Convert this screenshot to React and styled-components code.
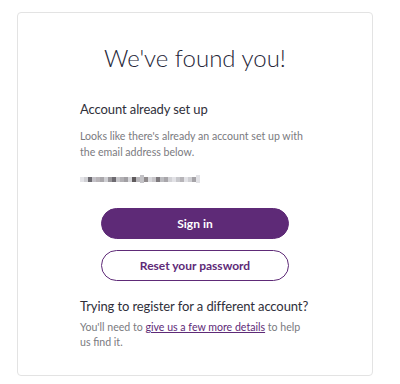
import React from "react";
import styled, { createGlobalStyle } from "styled-components";

const Global = createGlobalStyle`
  html, body {
    margin: 0;
    padding: 0;
    background: #fff;
  }
  body {
    font-family: Lato, "Open Sans", sans-serif;
    color: #2f2f3a;
  }
`;

const Card = styled.div`
  box-sizing: border-box;
  margin: 12px 0 0 17px;
  width: 356px;
  height: 364px;
  border: 1px solid #e3e3e3;
  border-radius: 4px;
  display: flex;
  flex-direction: column;
  align-items: center;
  padding-top: 30px;
`;

const Title = styled.h1`
  margin: 0;
  font-size: 24px;
  font-weight: 300;
  line-height: 30px;
  color: #262638;
`;

const Column = styled.div`
  width: 236px;
  margin-left: 6px;
  margin-top: 28px;
  display: flex;
  flex-direction: column;
`;

const Heading = styled.h2`
  margin: 0;
  font-size: 13px;
  font-weight: 400;
  line-height: 17px;
  letter-spacing: -0.1px;
  color: #2f2f3a;
`;

const Para = styled.p`
  margin: ${(p) => p.$top || 0}px 0 0;
  max-width: ${(p) => p.$max || 236}px;
  font-size: 10.6px;
  line-height: ${(p) => p.$lh || 16}px;
  color: #7a7a80;

  a {
    color: #5e2a77;
    text-decoration: underline;
  }
`;

const Blur = styled.div`
  margin-top: 13px;
  display: flex;
  height: 12px;
  align-items: center;
`;

const Pix = styled.span`
  width: 4px;
  height: ${(p) => p.$h || 5}px;
  background: ${(p) => p.$c};
`;

const Buttons = styled.div`
  margin-top: 23px;
  display: flex;
  flex-direction: column;
  align-items: center;
  gap: 11px;
`;

const Button = styled.button`
  box-sizing: border-box;
  width: 188px;
  height: 31px;
  border-radius: 16px;
  font-family: Lato, sans-serif;
  font-size: 12px;
  font-weight: 700;
  cursor: pointer;
  border: 1.5px solid #5e2a77;
  background: ${(p) => (p.$outline ? "#fff" : "#5e2a77")};
  color: ${(p) => (p.$outline ? "#5e2a77" : "#fff")};
`;

const Lower = styled.div`
  width: 236px;
  margin-left: 6px;
  margin-top: 17px;
`;

const blurColors = [
  "#e4e4e8", "#d0d0d4", "#6c6a70", "#c4c2c8", "#b8b4b8", "#a9a7ab",
  "#cfcfd3", "#9a989c", "#6d6a70", "#c7c6ca", "#b2b0b4", "#a19fa3",
  "#d6d6da", "#5f5a5c", "#b9b7bb", "#c3c2c6", "#8f8a8c", "#d7d7db",
  "#c7c5c9", "#7e7a7e", "#bcbcc0", "#a8a6aa", "#d2d2d6", "#e2e2e6",
  "#c8c8cc", "#b6b4b8", "#e3e3e7", "#cfcfd3", "#a5a3a7", "#e2e2e6",
];

const App = () => (
  <>
    <Global />
    <Card>
      <Title>We've found you!</Title>
      <Column>
        <Heading>Account already set up</Heading>
        <Para $top={10}>
          Looks like there's already an account set up with the email address
          below.
        </Para>
        <Blur>
          {blurColors.map((c, i) => (
            <Pix key={i} $c={c} $h={i === 15 || i === 29 ? 8 : 5} />
          ))}
        </Blur>
      </Column>
      <Buttons>
        <Button>Sign in</Button>
        <Button $outline>Reset your password</Button>
      </Buttons>
      <Lower>
        <Heading>Trying to register for a different account?</Heading>
        <Para $top={5} $lh={15} $max={226}>
          You'll need to <a href="#">give us a few more details</a> to help us
          find it.
        </Para>
      </Lower>
    </Card>
  </>
);

export default App;
